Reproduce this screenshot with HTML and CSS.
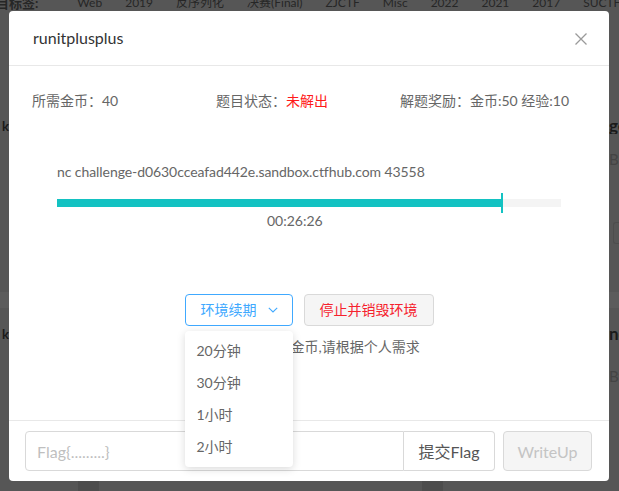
FILE: index.html
```html
<!DOCTYPE html>
<html lang="zh-CN">
<head>
<meta charset="utf-8">
<title>runitplusplus</title>
<link rel="stylesheet" href="styles.css">
</head>
<body>
<div class="page">
  <div class="tags">
    <span class="tags-label">题目标签:</span>
    <span>Web</span><span>2019</span><span>反序列化</span><span>决赛(Final)</span><span>ZJCTF</span><span>Misc</span><span>2022</span><span>2021</span><span>2017</span><span>SUCTF</span>
  </div>
  <div class="bg-row bg-row1"><span class="bg-left">k</span><span class="bg-title">ge</span></div>
  <div class="bg-row bg-row2"><span></span><span class="bg-sub">BS</span></div>
  <div class="bg-row bg-row3"><span></span><span class="bg-box"></span></div>
  <div class="bg-band"></div>
  <div class="bg-row bg-row4"><span class="bg-left">k</span><span class="bg-title">nc</span></div>
  <div class="bg-row bg-row5"><span></span><span class="bg-sub">By</span></div>
  <div class="bg-bottom"><span class="bg-stripe s1"></span><span class="bg-stripe s2"></span></div>
</div>

<div class="modal">
  <div class="modal-header">
    <div class="modal-title">runitplusplus</div>
    <svg class="close" width="14" height="14" viewBox="0 0 14 14"><path d="M1.5 1.5L12.5 12.5M12.5 1.5L1.5 12.5" stroke="#9a9a9a" stroke-width="1.3" fill="none"/></svg>
  </div>
  <div class="modal-body">
    <div class="info">
      <div>所需金币：40</div>
      <div>题目状态：<span class="red">未解出</span></div>
      <div>解题奖励：金币:50 经验:10</div>
    </div>
    <div class="env">
      <div class="nc">nc challenge-d0630cceafad442e.sandbox.ctfhub.com 43558</div>
      <div class="bar"><div class="fill" style="width:444px"></div><div class="tick"></div></div>
      <div class="timer">00:26:26</div>
    </div>
    <div class="actions">
      <div class="renew">
        <div class="btn btn-primary">环境续期<svg class="chev" width="10" height="6" viewBox="0 0 10 6"><path d="M0.8 0.8L5 5L9.2 0.8" stroke="#40a9ff" stroke-width="1.1" fill="none"/></svg></div>
        <ul class="dropdown">
          <li>20分钟</li>
          <li>30分钟</li>
          <li>1小时</li>
          <li>2小时</li>
        </ul>
      </div>
      <div class="btn btn-danger">停止并销毁环境</div>
    </div>
    <div class="note">续期每次消耗5金币,请根据个人需求</div>
  </div>
  <div class="modal-footer">
    <div class="input-group">
      <div class="flag-input">Flag{.........}</div>
      <div class="addon">提交Flag</div>
    </div>
    <div class="btn-writeup">WriteUp</div>
  </div>
</div>
</body>
</html>
```

FILE: styles.css
```css
* { box-sizing: border-box; }
html, body { margin: 0; padding: 0; }
body {
  width: 619px;
  height: 491px;
  overflow: hidden;
  font-family: Lato, "Noto Sans CJK SC", sans-serif;
  background: #565656;
  position: relative;
}

/* background page (under mask) */
.page {
  height: 491px;
  overflow: hidden;
  color: #1e1e1e;
  font-size: 13px;
}
.tags {
  display: flex;
  gap: 23px;
  white-space: nowrap;
  margin-top: -8px;
  margin-left: -17px;
  height: 22px;
  line-height: 22px;
  font-size: 12px;
  color: #262626;
}
.tags-label { font-weight: bold; font-size: 13px; margin-right: 16px; }
.bg-row {
  display: flex;
  justify-content: space-between;
  height: 16px;
  line-height: 16px;
}
.bg-row1 { margin-top: 104px; }
.bg-row2 { margin-top: 17px; }
.bg-row3 { margin-top: 55px; height: 22px; }
.bg-row4 { margin-top: 18px; }
.bg-row5 { margin-top: 26px; }
.bg-left { margin-left: 2px; font-weight: bold; color: #1a1a1a; }
.bg-title { font-size: 17px; font-weight: bold; color: #1a1a1a; width: 10px; overflow: hidden; }
.bg-sub { font-size: 15px; color: #444; width: 10px; overflow: hidden; }
.bg-box { width: 6px; height: 22px; border: 1px solid #4d4d4d; border-right: none; border-radius: 3px 0 0 3px; }
.bg-band { height: 16px; background: #5c5c5c; margin-top: 48px; }
.bg-bottom { height: 20px; margin-top: 97px; display: flex; }
.bg-stripe { display: block; height: 20px; width: 21px; background: #4d4d4d; }
.s1 { margin-left: 78px; }
.s2 { margin-left: 323px; }

/* modal */
.modal {
  position: absolute;
  left: 9px;
  top: 11px;
  width: 600px;
  height: 470px;
  background: #fff;
  border-radius: 4px;
  display: flex;
  flex-direction: column;
  z-index: 10;
}
.modal-header {
  height: 55px;
  flex: none;
  border-bottom: 1px solid #e8e8e8;
  display: flex;
  align-items: center;
  justify-content: space-between;
  padding: 0 21px 0 24px;
}
.modal-title {
  font-size: 16px;
  color: #333;
  line-height: 22px;
}
.close { display: block; margin-top: 1px; }

.modal-body {
  flex: 1;
  padding: 24px 0 0 23px;
  color: #666;
  font-size: 14px;
  line-height: 22px;
}
.info {
  display: grid;
  grid-template-columns: 184px 184px 184px;
}
.red { color: #ff1a1a; }

.env {
  margin-top: 49px;
  padding-left: 25px;
}
.nc { color: #666; letter-spacing: -0.07px; }
.bar {
  position: relative;
  margin-top: 16px;
  width: 504px;
  height: 8px;
  background: #f4f4f4;
}
.fill { height: 8px; background: #13c2c2; }
.tick {
  position: absolute;
  left: 444px;
  top: -6px;
  width: 2px;
  height: 20px;
  background: #13c2c2;
}
.timer {
  margin-top: 3px;
  padding-left: 210px;
  color: #666;
}

.actions {
  margin-top: 62px;
  margin-left: -23px;
  display: flex;
  justify-content: center;
  gap: 11px;
}
.renew { position: relative; }
.btn {
  height: 32px;
  display: flex;
  align-items: center;
  border-radius: 4px;
  font-size: 14px;
  white-space: nowrap;
}
.btn-primary {
  width: 108px;
  border: 1px solid #40a9ff;
  color: #40a9ff;
  padding-left: 15px;
  background: #fff;
}
.chev { margin-left: 11px; }
.btn-danger {
  width: 130px;
  border: 1px solid #d9d9d9;
  background: #f5f5f5;
  color: #f5222d;
  justify-content: center;
}
.dropdown {
  position: absolute;
  left: 0;
  top: 37px;
  width: 108px;
  margin: 0;
  padding: 4px 0;
  list-style: none;
  background: #fff;
  border-radius: 4px;
  box-shadow: 0 2px 8px rgba(0, 0, 0, 0.15);
  z-index: 5;
}
.dropdown li {
  padding: 5px 12px;
  line-height: 22px;
  font-size: 14px;
  color: #666;
}
.note {
  margin-top: 10px;
  margin-left: -23px;
  text-align: center;
  color: #666;
}

.modal-footer {
  flex: none;
  border-top: 1px solid #e8e8e8;
  padding: 10px 17px 10px 16px;
  display: flex;
  gap: 8px;
}
.input-group { display: flex; }
.flag-input {
  width: 379px;
  height: 40px;
  border: 1px solid #d9d9d9;
  border-radius: 4px 0 0 4px;
  padding-left: 11px;
  display: flex;
  align-items: center;
  color: #bfbfbf;
  font-size: 16px;
}
.addon {
  width: 91px;
  height: 40px;
  border: 1px solid #d9d9d9;
  border-left: none;
  border-radius: 0 4px 4px 0;
  display: flex;
  align-items: center;
  justify-content: center;
  color: #555;
  font-size: 16px;
}
.btn-writeup {
  width: 89px;
  height: 40px;
  border: 1px solid #d9d9d9;
  border-radius: 4px;
  background: #f5f5f5;
  color: #c4c4c4;
  display: flex;
  align-items: center;
  justify-content: center;
  font-size: 16px;
}
```
